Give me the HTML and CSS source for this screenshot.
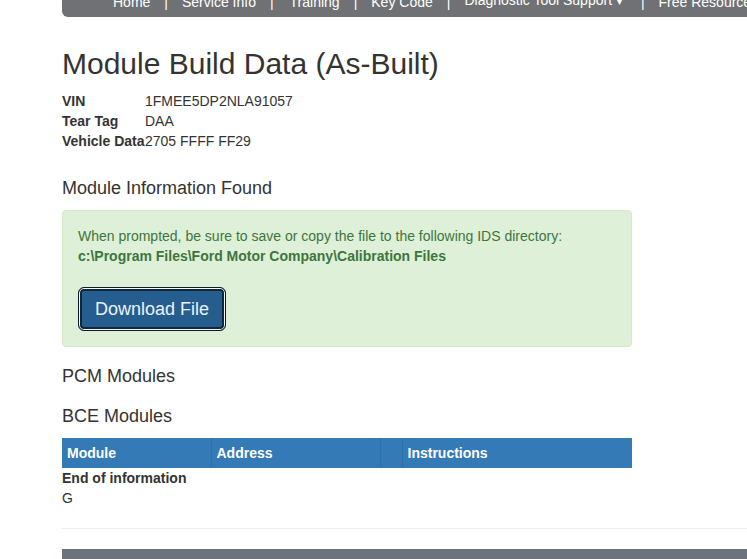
FILE: index.html
```html
<!DOCTYPE html>
<html lang="en">
<head>
    <meta charset="UTF-8">
    <title>Module Build Data (As-Built)</title>
    <link rel="stylesheet" href="styles.css">
</head>
<body>
<div class="container">
    <div class="navbar">
        <a class="nav-link">Home</a>
        <span class="nav-sep">|</span>
        <a class="nav-link">Service Info</a>
        <span class="nav-sep">|</span>
        <a class="nav-link">Training</a>
        <span class="nav-sep">|</span>
        <a class="nav-link">Key Code</a>
        <span class="nav-sep">|</span>
        <a class="nav-link">Diagnostic Tool Support <span class="caret">&#9662;</span></a>
        <span class="nav-sep">|</span>
        <a class="nav-link">Free Resources</a>
    </div>

    <h2 class="page-title">Module Build Data (As-Built)</h2>

    <dl class="vehicle-info">
        <dt>VIN</dt><dd>1FMEE5DP2NLA91057</dd>
        <dt>Tear Tag</dt><dd>DAA</dd>
        <dt>Vehicle Data</dt><dd>2705 FFFF FF29</dd>
    </dl>

    <h4 class="section-title found">Module Information Found</h4>

    <div class="alert-success">
        <div>When prompted, be sure to save or copy the file to the following IDS directory:</div>
        <div class="path">c:\Program Files\Ford Motor Company\Calibration Files</div>
        <button class="download-button">Download File</button>
    </div>

    <h4 class="section-title">PCM Modules</h4>
    <h4 class="section-title">BCE Modules</h4>

    <table class="module-table">
        <thead>
        <tr>
            <th class="col-module">Module</th>
            <th class="col-address">Address</th>
            <th class="col-blank"></th>
            <th>Instructions</th>
        </tr>
        </thead>
    </table>
    <div class="end-info">End of information</div>
    <div class="end-code">G</div>

    <hr class="divider">

    <div class="footer">Use of this system is subject to the Terms and Conditions and Privacy Policy</div>
</div>
</body>
</html>
```

FILE: styles.css
```css
* {
    box-sizing: border-box;
}

html, body {
    margin: 0;
    padding: 0;
    height: 100%;
    overflow: hidden;
    background-color: #fff;
}

body {
    font-family: "Liberation Sans", Arial, Helvetica, sans-serif;
    font-size: 14px;
    line-height: 20px;
    color: #333;
}

.container {
    margin-left: 62px;
    width: 1170px;
}

.navbar {
    display: flex;
    align-items: flex-end;
    height: 17px;
    padding: 0 0 8px 51px;
    background-color: #6f7175;
    border-bottom-left-radius: 6px;
    color: #fff;
    line-height: 14px;
    white-space: nowrap;
}

.nav-link {
    color: #fff;
}

.nav-sep {
    margin: 0 14px;
}

.nav-sep:nth-child(4) {
    margin-right: 16px;
}

.caret {
    font-size: 10px;
    margin: 0 5px 0 1px;
}

.page-title {
    font-size: 30px;
    font-weight: normal;
    line-height: 33px;
    margin: 30px 0 11px 0;
}

.vehicle-info {
    display: grid;
    grid-template-columns: 83px auto;
    margin: 0;
}

.vehicle-info dt {
    font-weight: bold;
}

.vehicle-info dd {
    margin: 0;
}

.section-title {
    font-size: 18px;
    font-weight: normal;
    line-height: 20px;
    margin: 19px 0 0 0;
}

.section-title.found {
    margin: 27px 0 12px 0;
}

.alert-success {
    width: 570px;
    background-color: #dff0d8;
    border: 1px solid #d6e9c6;
    border-radius: 4px;
    color: #3c763d;
    padding: 15px;
}

.alert-success .path {
    font-weight: bold;
}

.download-button {
    margin-top: 21px;
    height: 44px;
    padding: 0 16px;
    font-family: "Liberation Sans", Arial, sans-serif;
    font-size: 18px;
    color: #eaf3ff;
    background-color: #265d8f;
    border: 1px solid #0f1a24;
    border-radius: 6px;
    box-shadow: inset 0 0 0 1px #f4f8fb, inset 0 0 0 3px #10263a;
    cursor: pointer;
}

.section-title + .section-title {
    margin-top: 20px;
}

.module-table {
    width: 570px;
    margin-top: 12px;
    border-collapse: collapse;
}

.module-table th {
    background-color: #337ab7;
    color: #fff;
    text-align: left;
    font-weight: bold;
    height: 30px;
    padding: 0 5px;
    border-left: 1px solid #2f6fa7;
}

.module-table th:first-child {
    border-left: none;
}

.col-module {
    width: 149px;
}

.col-address {
    width: 169px;
}

.col-blank {
    width: 22px;
}

.end-info {
    font-weight: bold;
}

.divider {
    margin: 20px 0 0 0;
    border: 0;
    border-top: 1px solid #eee;
}

.footer {
    margin-top: 20px;
    height: 40px;
    background-color: #6d737a;
    color: #fff;
    padding: 7px 0 0 172px;
    font-size: 16px;
}
```
